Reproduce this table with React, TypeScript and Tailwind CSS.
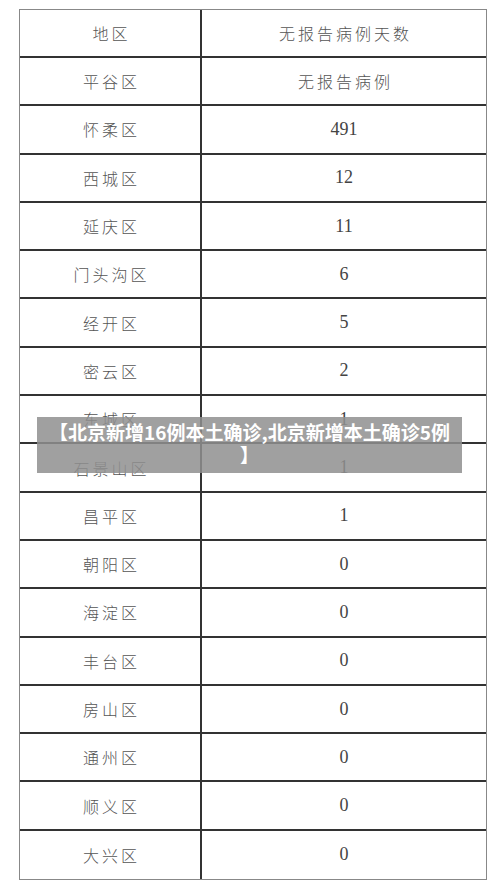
import React from "react";

const rows: [string, string][] = [
  ["平谷区", "无报告病例"],
  ["怀柔区", "491"],
  ["西城区", "12"],
  ["延庆区", "11"],
  ["门头沟区", "6"],
  ["经开区", "5"],
  ["密云区", "2"],
  ["东城区", "1"],
  ["石景山区", "1"],
  ["昌平区", "1"],
  ["朝阳区", "0"],
  ["海淀区", "0"],
  ["丰台区", "0"],
  ["房山区", "0"],
  ["通州区", "0"],
  ["顺义区", "0"],
  ["大兴区", "0"],
];

const cjk = { fontFamily: '"Noto Sans CJK SC", sans-serif' };
const num = { fontFamily: '"Liberation Serif", "Noto Sans CJK SC", serif' };

export default function App() {
  return (
    <div className="relative h-[891px] w-[500px] overflow-hidden bg-white">
      {/* Table */}
      <div className="pl-[19px] pt-[9px]">
        <div className="w-[468px] border border-[#888]">
          <div className="grid h-[48px] grid-cols-[182px_1fr] border-b-2 border-[#333]">
            <div
              className="flex items-center justify-center border-r-2 border-[#333] pl-[3px] text-[16px] font-light tracking-[3px] text-[#555]"
              style={cjk}
            >
              地区
            </div>
            <div
              className="flex items-center justify-center pl-[3px] text-[16px] font-light tracking-[3px] text-[#555]"
              style={cjk}
            >
              无报告病例天数
            </div>
          </div>
          {rows.map(([area, days], i) => (
            <div
              key={area}
              className={`grid h-[48.3px] grid-cols-[182px_1fr] ${
                i < rows.length - 1 ? "border-b-2 border-[#333]" : ""
              }`}
            >
              <div
                className="flex items-center justify-center border-r-2 border-[#333] pl-[3px] text-[16px] font-light tracking-[3px] text-[#555]"
                style={cjk}
              >
                {area}
              </div>
              {/^\d+$/.test(days) ? (
                <div
                  className="flex items-center justify-center text-[18px] text-[#444]"
                  style={num}
                >
                  {days}
                </div>
              ) : (
                <div
                  className="flex items-center justify-center pl-[3px] text-[16px] font-light tracking-[3px] text-[#555]"
                  style={cjk}
                >
                  {days}
                </div>
              )}
            </div>
          ))}
        </div>
      </div>

      {/* Title banner over the image */}
      <div className="absolute left-[37px] top-[417px] h-[56px] w-[425px] bg-[#8f8f8f]/85 px-[10px] pt-[3px]">
        <p
          className="text-center text-[19px] font-bold leading-[23px] text-white [line-break:anywhere]"
          style={cjk}
        >
          【北京新增16例本土确诊,北京新增本土确诊5例】
        </p>
      </div>
    </div>
  );
}
